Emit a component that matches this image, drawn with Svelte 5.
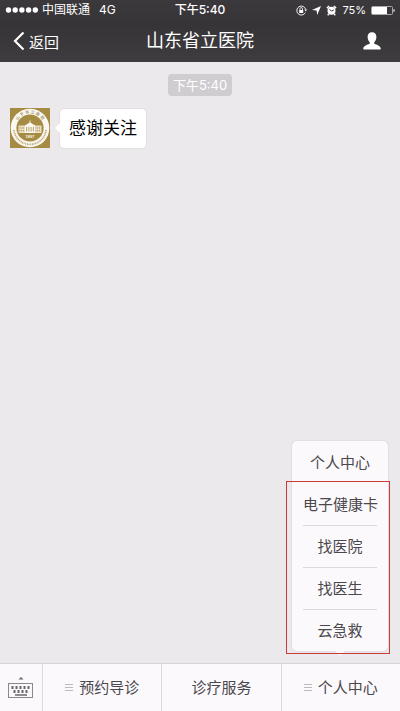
<script>
  const time = "下午5:40";
  const menuItems = ["电子健康卡", "找医院", "找医生", "云急救"];
  const signalDots = [0, 1, 2, 3, 4];
  const keyRow = [0, 1, 2, 3, 4];
  const columns = [0, 1, 2, 3];

  let menuOpen = $state(true);

  function toggleMenu() {
    menuOpen = !menuOpen;
  }
</script>

{#snippet lines()}
  <svg class="lines" width="8" height="8" viewBox="0 0 8 8" aria-hidden="true">
    <path d="M0 1.5h8M0 4.5h8M0 7.5h8" stroke="#bcb9bd" />
  </svg>
{/snippet}

<div class="screen">
  <header>
    <div class="status">
      <div class="side">
        <svg width="33" height="8" viewBox="0 0 33 8" aria-hidden="true">
          {#each signalDots as i}
            <circle cx={3.5 + i * 6.7} cy="4" r="2.7" fill="#fff" />
          {/each}
        </svg>
        <span class="carrier">中国联通</span>
        <span>4G</span>
      </div>
      <span class="clock">{time}</span>
      <div class="side right">
        <svg width="11" height="11" viewBox="0 0 11 11" fill="none" stroke="#fff" aria-hidden="true">
          <path d="M9.3 7.7A4.500 4.500 0 1 1 9.700 4.500" stroke-width=".9" />
          <path d="M8.400 4.600h2.600L9.800 6.600z" fill="#fff" stroke="none" />
          <rect x="3.200" y="5" width="4" height="3" fill="#fff" stroke="none" />
          <path d="M3.900 5V3.900a1.300 1.300 0 0 1 2.600 0V5" stroke-width=".8" />
        </svg>
        <svg width="9" height="9" viewBox="0 0 9 9" aria-hidden="true">
          <path d="M9 0 5.200 9 4.600 4.600 0 4z" fill="#fff" />
        </svg>
        <svg width="11" height="11" viewBox="0 0 11 11" aria-hidden="true">
          <circle cx="5.500" cy="5.800" r="4" fill="#fff" />
          <path d="M.9 3.100 3.200 1M10.100 3.100 7.800 1M2.800 9 1.700 10.300M8.200 9l1.100 1.300" stroke="#fff" stroke-width="1.500" />
          <path d="M3.500 4.200 5.500 6.200 7.800 4.900" fill="none" stroke="#3a373b" />
        </svg>
        <span class="percent">75%</span>
        <svg width="24" height="9" viewBox="0 0 24 9" aria-hidden="true">
          <rect x=".5" y=".5" width="21" height="8" rx="1" fill="none" stroke="#aaa7ab" />
          <rect x="1" y="1" width="15" height="7" fill="#fff" />
          <path d="M22.500 3v3q1.200-.3 1.200-1.500T22.500 3z" fill="#fff" />
        </svg>
      </div>
    </div>
    <nav>
      <button class="back">
        <svg width="12" height="20" viewBox="0 0 12 20" aria-hidden="true">
          <path d="M10.500 1.500 2 10l8.500 8.500" fill="none" stroke="#fff" stroke-width="2.200" />
        </svg>
        返回
      </button>
      <h1>山东省立医院</h1>
      <button class="profile" aria-label="个人资料">
        <svg width="18" height="18" viewBox="0 0 18 18" aria-hidden="true">
          <path
            d="M9 .3c2.700 0 4.400 1.900 4.400 4.700 0 2.200-.9 4.200-2.200 5.300v1.200c.5.9 6.300 1.700 6.600 5.100q0 .9-.8.9H1q-.8 0-.8-.9c.3-3.400 6.100-4.200 6.600-5.100v-1.200C5.500 9.200 4.600 7.200 4.600 5 4.600 2.200 6.300.3 9 .3z"
            fill="#fff"
          />
        </svg>
      </button>
    </nav>
  </header>

  <main>
    <time>{time}</time>
    <div class="message">
      <svg class="avatar" width="40" height="40" viewBox="0 0 40 40" role="img" aria-label="山东省立医院">
        <rect width="40" height="40" fill="#a68b43" />
        <circle cx="20" cy="20" r="19.300" fill="#fbf8f2" />
        <circle cx="20" cy="20" r="13.600" fill="#a68b43" />
        <path id="seal-arc" d="M5.300 20a14.700 14.700 0 0 1 29.400 0" fill="none" />
        <text class="seal">
          <textPath href="#seal-arc" startOffset="50%" text-anchor="middle">山 东 省 立 医 院</textPath>
        </text>
        <path d="M3.900 22a16.200 16.200 0 0 0 32.200 0" fill="none" stroke="#bba66e" stroke-width="1.800" stroke-dasharray="1 .7" />
        <path d="M15 17.500 20 14.200l5 3.300zM19.600 12.500h.8v2h-.8z" fill="#fbf8f2" />
        <path d="M8.500 17.500h23v7.500h-23z" fill="#e9dfc5" />
        <path d="M15 17h10v8H15z" fill="#fbf8f2" />
        <path d="M9.500 20h5M25.500 20h5M9.500 22.700h5M25.500 22.700h5" stroke="#a68b43" stroke-width="1" stroke-dasharray="1 .7" />
        {#each columns as i}
          <rect x={16.3 + i * 2.2} y="19" width=".8" height="4.500" fill="#a68b43" />
        {/each}
        <text class="year" x="20" y="30" text-anchor="middle">1897</text>
      </svg>
      <p class="bubble">感谢关注</p>
    </div>
  </main>

  <footer>
    <button class="keyboard" aria-label="键盘">
      <svg width="26" height="22" viewBox="0 0 26 22" aria-hidden="true">
        <path d="M10.500 2.500 13 0l2.500 2.500z" fill="#69666a" />
        <rect x=".5" y="6.500" width="24" height="14" fill="none" stroke="#8b888c" />
        {#each keyRow as i}
          <rect x={3.5 + i * 4} y="9" width="2" height="3" fill="#69666a" />
          {#if i < 4}
            <rect x={5.5 + i * 4} y="13" width="2" height="3" fill="#69666a" />
          {/if}
        {/each}
        <path d="M7 18h12" stroke="#69666a" stroke-width="1.500" />
      </svg>
    </button>
    <div class="tab">
      <button>{@render lines()}预约导诊</button>
    </div>
    <div class="tab">
      <button>诊疗服务</button>
    </div>
    <div class="tab">
      <button aria-expanded={menuOpen} onclick={toggleMenu}>{@render lines()}个人中心</button>
      {#if menuOpen}
        <div class="menu">
          <button>个人中心</button>
          <div class="marked">
            {#each menuItems as item}
              <button>{item}</button>
            {/each}
          </div>
        </div>
      {/if}
    </div>
  </footer>
</div>

<style>
  :global(body) {
    margin: 0;
    font-family: "Liberation Sans", "Noto Sans CJK SC", sans-serif;
  }

  .screen {
    min-height: 100vh;
    display: flex;
    flex-direction: column;
    background: #ece9ec;
  }

  button {
    margin: 0;
    padding: 0;
    border: none;
    background: none;
    font-family: inherit;
    font-size: 15px;
    color: #4b484c;
    cursor: pointer;
  }

  svg {
    flex: none;
    display: block;
  }

  header {
    background: linear-gradient(#3c393d, #373438 40%, #3f3c40);
    color: #fff;
  }

  .status {
    display: flex;
    align-items: center;
    height: 20px;
    padding: 0 5px;
    font-family: Inter, "Noto Sans CJK SC", sans-serif;
    font-size: 12px;
    line-height: 20px;
  }

  .side {
    flex: 1;
    display: flex;
    align-items: center;
    gap: 4px;
  }

  .right {
    justify-content: flex-end;
    gap: 5px;
  }

  .carrier {
    margin-right: 5px;
  }

  .clock {
    font-weight: 500;
  }

  .percent {
    font-size: 11px;
  }

  nav {
    display: grid;
    grid-template-columns: 1fr auto 1fr;
    align-items: center;
    height: 42px;
    padding: 0 13px;
  }

  nav button {
    color: #fff;
  }

  .back {
    justify-self: start;
    display: flex;
    align-items: center;
    gap: 4px;
  }

  .profile {
    justify-self: end;
    margin-right: 6px;
  }

  h1 {
    margin: 0;
    font-size: 18px;
    font-weight: 400;
    line-height: 42px;
  }

  main {
    flex: 1;
    display: flex;
    flex-direction: column;
    align-items: center;
    gap: 12px;
    padding: 12px 10px;
  }

  time {
    padding: 0 5px;
    border-radius: 4px;
    background: #d0cdd1;
    color: #fff;
    font-family: Inter, "Noto Sans CJK SC", sans-serif;
    font-size: 13px;
    line-height: 22px;
  }

  .message {
    align-self: stretch;
    display: flex;
    align-items: flex-start;
    gap: 9px;
  }

  .seal {
    font-size: 4px;
    fill: #7d672e;
  }

  .year {
    font-size: 4px;
    font-weight: 700;
    fill: #fbf8f2;
  }

  .bubble {
    position: relative;
    margin: 0;
    padding: 1px 9px 0;
    border: 1px solid #e2dfe3;
    border-radius: 5px;
    background: #fff;
    color: #000;
    font-size: 17px;
    line-height: 38px;
  }

  .bubble::before {
    content: "";
    position: absolute;
    top: 14px;
    left: -5px;
    border: 5px solid transparent;
    border-left: none;
    border-right-color: #fff;
  }

  footer {
    display: flex;
    height: 47px;
    border-top: 1px solid #d6d3d7;
    background: #fcf9fd;
  }

  .keyboard {
    display: flex;
    align-items: center;
    justify-content: center;
    width: 42px;
  }

  .tab {
    position: relative;
    flex: 1;
    display: flex;
    border-left: 1px solid #dedbdf;
  }

  .tab > button {
    flex: 1;
    display: flex;
    align-items: center;
    justify-content: center;
    gap: 6px;
    padding-bottom: 2px;
  }

  .menu {
    position: absolute;
    right: 12px;
    bottom: calc(100% + 13px);
    width: 96px;
    border-radius: 5px;
    background: #fcf9fd;
    box-shadow: 0 0 2px #c4c1c5;
  }

  .menu::after {
    content: "";
    position: absolute;
    top: 100%;
    left: 50%;
    margin-left: -5px;
    border: 5px solid transparent;
    border-bottom: none;
    border-top-color: #fcf9fd;
  }

  .menu button {
    display: block;
    width: 100%;
    height: 42px;
    padding-bottom: 2px;
  }

  .marked {
    position: relative;
    padding: 0 11px;
  }

  .marked::after {
    content: "";
    position: absolute;
    z-index: 1;
    inset: -2px -2px -3px -6px;
    border: 1px solid #cb3a36;
    pointer-events: none;
  }

  .marked button {
    white-space: nowrap;
  }

  .marked button + button {
    border-top: 1px solid #dcd9dd;
  }
</style>
